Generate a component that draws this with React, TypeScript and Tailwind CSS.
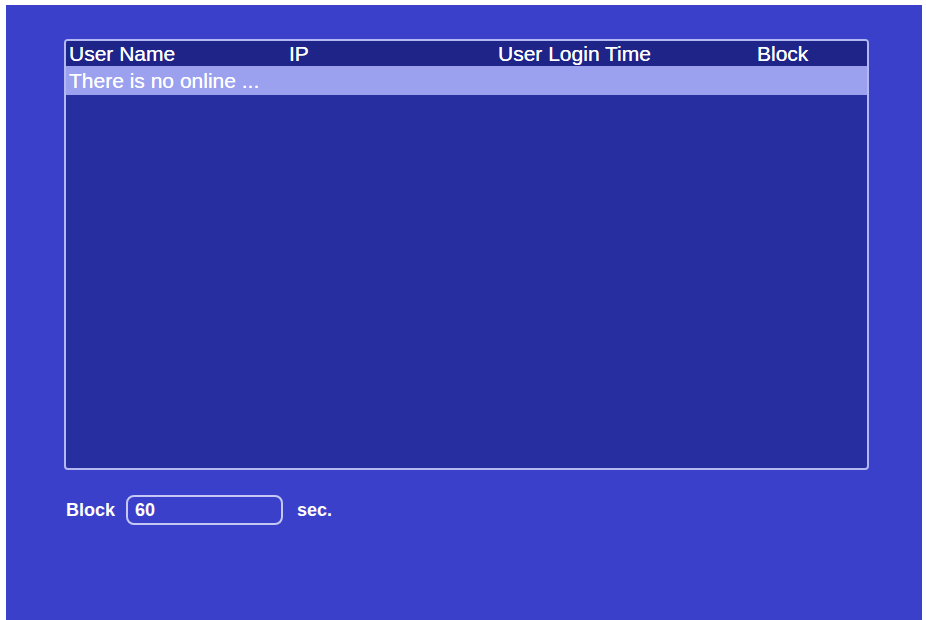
import { useState } from 'react';

const COLUMNS = [
  { key: 'user', label: 'User Name' },
  { key: 'ip', label: 'IP' },
  { key: 'login', label: 'User Login Time' },
  { key: 'block', label: 'Block' },
];

export default function App() {
  const [blockSec, setBlockSec] = useState('60');

  return (
    <div
      className="w-[926px] h-[620px] bg-white pt-[5px] pl-[6px] pr-[4px] overflow-hidden"
      style={{ fontFamily: '"Liberation Sans", Arial, sans-serif' }}
    >
      <div className="h-[615px] bg-[#3a40c9] pt-[34px] pl-[58px] pr-[53px]">
        {/* Online users table */}
        <div className="h-[431px] rounded-[4px] border-2 border-[#b4b8f2] bg-[#272e9f] flex flex-col overflow-hidden">
          <div className="h-[25px] bg-[#1f2588] grid grid-cols-[220px_209px_259px_1fr] pl-[3px] items-center text-white text-[21px] leading-none [text-shadow:0_0_0.6px_#fff]">
            {COLUMNS.map((c) => (
              <span key={c.key}>{c.label}</span>
            ))}
          </div>
          <div className="h-[29px] bg-[#9ba0ef] flex items-center pl-[3px] text-white text-[21px] leading-none [text-shadow:0_0_0.6px_#fff]">
            There is no online ...
          </div>
        </div>

        {/* Block duration */}
        <div className="mt-[25px] ml-[2px] flex items-center text-white text-[18px]">
          <span className="font-bold">Block</span>
          <div className="ml-[11px] w-[157px] h-[30px] rounded-lg border-2 border-[#c5c8f5] flex items-center pl-[7px]">
            <input
              value={blockSec}
              onChange={(e) => setBlockSec(e.target.value)}
              className="w-full bg-transparent outline-none text-white text-[18px] font-bold"
            />
          </div>
          <span className="ml-[14px] font-bold">sec.</span>
        </div>
      </div>
    </div>
  );
}
